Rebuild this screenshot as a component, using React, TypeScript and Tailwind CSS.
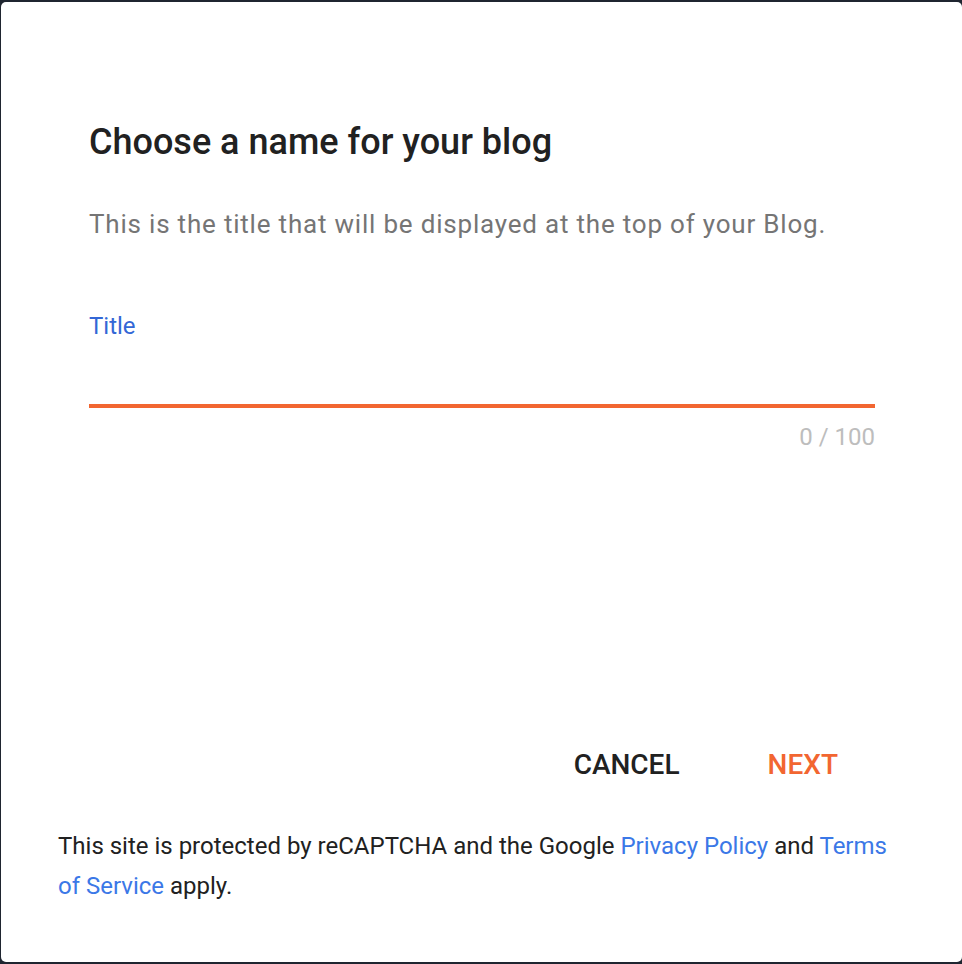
export default function App() {
  return (
    <div className="min-h-[964px] w-[962px] bg-[#1f2530] pt-[2px] pl-[1px] pb-[2px]" style={{ fontFamily: 'Roboto, "Liberation Sans", sans-serif' }}>
      <div className="flex h-[960px] flex-col rounded-[5px] bg-white">
        <div className="pl-[88px] pr-[87px] pt-[120px]">
          <h1 className="text-[36px] leading-[40px] font-medium text-[#212121]">Choose a name for your blog</h1>
          <p className="mt-[44px] text-[26px] leading-[36px] tracking-[0.8px] text-[#757575]">
            This is the title that will be displayed at the top of your Blog.
          </p>

          {/* Title field */}
          <div className="mt-[69px]">
            <label className="block text-[24px] leading-[30px] text-[#3367d6]">Title</label>
            <input className="block h-[67px] w-full border-b-4 border-[#f26631] outline-none" />
            <div className="mt-[14px] text-right text-[24px] leading-[30px] text-[#bdbdbd]">0 / 100</div>
          </div>
        </div>

        <div className="mt-auto flex justify-end gap-[88px] pr-[124px]">
          <button className="text-[28px] leading-[32px] font-medium text-[#212121]">CANCEL</button>
          <button className="text-[28px] leading-[32px] font-medium text-[#f26631]">NEXT</button>
        </div>

        <p className="mt-[45px] mb-[56px] pl-[57px] pr-[60px] text-[24px] leading-[40px] text-[#212121]">
          This site is protected by reCAPTCHA and the Google <a className="text-[#3b78e7]">Privacy Policy</a> and{' '}
          <a className="text-[#3b78e7]">Terms of Service</a> apply.
        </p>
      </div>
    </div>
  );
}
